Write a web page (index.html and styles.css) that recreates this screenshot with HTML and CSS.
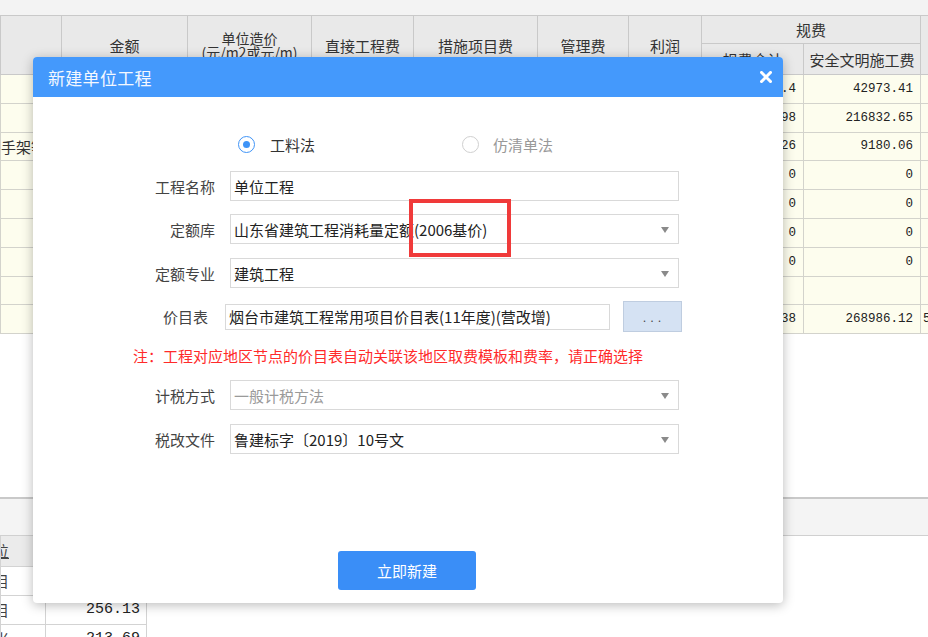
FILE: index.html
```html
<!DOCTYPE html>
<html lang="zh-CN">
<head>
<meta charset="utf-8">
<title>新建单位工程</title>
<link rel="stylesheet" href="styles.css">
</head>
<body>
<div class="app">
  <div class="upper">
    <div class="topbar"></div>
    <table class="grid">
      <colgroup>
        <col class="w61"><col class="w126"><col class="w124"><col class="w102"><col class="w124"><col class="w91"><col class="w73"><col class="w102"><col class="w117"><col class="w100">
      </colgroup>
      <thead>
        <tr class="h1">
          <th rowspan="2"></th>
          <th rowspan="2">金额</th>
          <th rowspan="2" class="two">单位造价<br>(元/m2或元/m)</th>
          <th rowspan="2">直接工程费</th>
          <th rowspan="2">措施项目费</th>
          <th rowspan="2">管理费</th>
          <th rowspan="2">利润</th>
          <th colspan="2">规费</th>
          <th rowspan="2"></th>
        </tr>
        <tr class="h2">
          <th>规费合计</th>
          <th>安全文明施工费</th>
        </tr>
      </thead>
      <tbody>
        <tr><td></td><td></td><td></td><td></td><td></td><td></td><td></td><td class="num">52156.4</td><td class="num">42973.41</td><td></td></tr>
        <tr><td></td><td></td><td></td><td></td><td></td><td></td><td></td><td class="num">259188.98</td><td class="num">216832.65</td><td></td></tr>
        <tr><td class="name">手架等</td><td></td><td></td><td></td><td></td><td></td><td></td><td class="num">10974.26</td><td class="num">9180.06</td><td></td></tr>
        <tr><td></td><td></td><td></td><td></td><td></td><td></td><td></td><td class="num">0</td><td class="num">0</td><td></td></tr>
        <tr><td></td><td></td><td></td><td></td><td></td><td></td><td></td><td class="num">0</td><td class="num">0</td><td></td></tr>
        <tr><td></td><td></td><td></td><td></td><td></td><td></td><td></td><td class="num">0</td><td class="num">0</td><td></td></tr>
        <tr><td></td><td></td><td></td><td></td><td></td><td></td><td></td><td class="num">0</td><td class="num">0</td><td></td></tr>
        <tr><td></td><td></td><td></td><td></td><td></td><td></td><td></td><td></td><td></td><td></td></tr>
        <tr><td></td><td></td><td></td><td></td><td></td><td></td><td></td><td class="num">321426.38</td><td class="num">268986.12</td><td class="lnum">52440.26</td></tr>
      </tbody>
    </table>
  </div>
  <div class="strip"></div>
  <table class="sub">
    <colgroup><col class="w45"><col class="w101"></colgroup>
    <thead><tr><th class="cut"><span class="shift ul">单位</span></th><th></th></tr></thead>
    <tbody>
      <tr><td class="cut"><span class="shift">项目</span></td><td class="num">1862.40</td></tr>
      <tr><td class="cut"><span class="shift">项目</span></td><td class="num">256.13</td></tr>
      <tr><td class="cut"><span class="shift">平米</span></td><td class="num">213.69</td></tr>
    </tbody>
  </table>
</div>

<div class="dialog">
  <div class="dlg-head">
    <span class="dlg-title">新建单位工程</span>
    <svg class="close" width="12" height="12" viewBox="0 0 12 12"><path d="M1.5 1.5 L10.5 10.5 M10.5 1.5 L1.5 10.5" stroke="#fff" stroke-width="3" stroke-linecap="square"/></svg>
  </div>
  <div class="dlg-body">
    <div class="radios">
      <label class="radio on"><span class="dot"></span><span>工料法</span></label>
      <label class="radio off"><span class="dot"></span><span>仿清单法</span></label>
    </div>
    <div class="row r-name">
      <span class="label">工程名称</span>
      <div class="field input">单位工程</div>
    </div>
    <div class="row r-lib">
      <span class="label">定额库</span>
      <div class="field select">山东省建筑工程消耗量定额(2006基价)<span class="arrow"></span></div>
    </div>
    <div class="row r-spec">
      <span class="label">定额专业</span>
      <div class="field select">建筑工程<span class="arrow"></span></div>
    </div>
    <div class="row r-price">
      <span class="label">价目表</span>
      <div class="pfield">
        <div class="pinput">烟台市建筑工程常用项目价目表(11年度)(营改增)</div>
        <div class="pbtn">. . .</div>
      </div>
    </div>
    <div class="note">注：工程对应地区节点的价目表自动关联该地区取费模板和费率，请正确选择</div>
    <div class="row r-tax">
      <span class="label">计税方式</span>
      <div class="field select disabled">一般计税方法<span class="arrow"></span></div>
    </div>
    <div class="row r-doc">
      <span class="label">税改文件</span>
      <div class="field select">鲁建标字〔2019〕10号文<span class="arrow"></span></div>
    </div>
    <div class="actions">
      <button class="primary">立即新建</button>
    </div>
  </div>
</div>

<div class="highlight"></div>
</body>
</html>
```

FILE: styles.css
```css
* { box-sizing: border-box; }
html, body {
  margin: 0;
  padding: 0;
  width: 928px;
  height: 637px;
  overflow: hidden;
  background: #fff;
  font-family: "Noto Sans CJK SC", "Microsoft YaHei", sans-serif;
  color: #333;
}

.app { width: 928px; height: 637px; overflow: hidden; position: relative; }
.upper { height: 497px; overflow: hidden; }
.topbar { height: 15px; background: #f3f3f3; }

.grid {
  border-collapse: collapse;
  table-layout: fixed;
  width: 1020px;
}
.w61 { width: 61px; } .w126 { width: 126px; } .w124 { width: 124px; }
.w102 { width: 102px; } .w91 { width: 91px; } .w73 { width: 73px; }
.w117 { width: 117px; } .w100 { width: 100px; }
.w45 { width: 45px; } .w101 { width: 101px; }

.grid th {
  background: #e9e9e9;
  border: 1px solid #c9c9c9;
  font-weight: normal;
  font-size: 15px;
  color: #333;
  padding: 0;
  text-align: center;
  white-space: nowrap;
  overflow: hidden;
}
.grid tr.h1 th { height: 28px; }
.grid tr.h2 th { height: 31px; }
.grid th.two { line-height: 14px; font-size: 14px; }

.grid td {
  background: #fdfdee;
  border: 1px solid #d3d3cc;
  height: 28.8px;
  padding: 0;
  font-size: 15px;
  white-space: nowrap;
  overflow: hidden;
}
td.num {
  font-family: "Liberation Mono", monospace;
  font-size: 12.5px;
  text-align: right;
  padding-right: 7px;
  color: #222;
}
td.lnum {
  font-family: "Liberation Mono", monospace;
  font-size: 12.5px;
  text-align: left;
  padding-left: 2px;
  color: #222;
}
td.name { text-align: left; color: #333; }

.strip {
  height: 39px;
  background: #f4f4f4;
  border-top: 2px solid #c9c9c9;
  border-bottom: 1px solid #d0d0d0;
}

.sub {
  border-collapse: collapse;
  table-layout: fixed;
  width: 146px;
}
.sub th {
  background: #ebebeb;
  border: 1px solid #d3d3d3;
  border-top: none;
  height: 30px;
  font-weight: normal;
  font-size: 15px;
  padding: 0;
  overflow: hidden;
  white-space: nowrap;
}
.sub td {
  border: 1px solid #d3d3d3;
  height: 29px;
  padding: 0;
  font-size: 15px;
  overflow: hidden;
  white-space: nowrap;
}
.sub .cut { text-align: left; color: #444; }
.shift { display: inline-block; margin-left: -22px; }
.shift.ul { text-decoration: underline; }
.sub td.num { padding-right: 6px; }

/* Dialog */
.dialog {
  position: absolute;
  left: 33px;
  top: 57px;
  width: 750px;
  height: 546px;
  background: #fff;
  border-radius: 4px;
  box-shadow: 0 2px 12px rgba(0, 0, 0, 0.28);
  display: flex;
  flex-direction: column;
  overflow: hidden;
}
.dlg-head {
  height: 40px;
  flex: none;
  background: #4499fc;
  color: #fff;
  display: flex;
  align-items: center;
  justify-content: space-between;
  padding: 0 11px 0 15px;
}
.dlg-title { font-size: 17px; letter-spacing: 0.3px; color: #f4f8ff; }
.close { display: block; }

.dlg-body {
  flex: 1;
  display: flex;
  flex-direction: column;
  padding-bottom: 13px;
}

.radios {
  margin-top: 37px;
  height: 20px;
  display: flex;
  align-items: center;
  padding-left: 205px;
  font-size: 15px;
}
.radio { display: flex; align-items: center; gap: 15px; }
.radio.on { width: 224px; color: #333; }
.radio.off { color: #999; gap: 14px; }
.dot {
  width: 17px;
  height: 17px;
  border-radius: 50%;
  border: 1px solid #d0d0d0;
  position: relative;
  flex: none;
}
.radio.on .dot { border-color: #3f94f7; }
.radio.on .dot::after {
  content: "";
  position: absolute;
  left: 4px;
  top: 4px;
  width: 7px;
  height: 7px;
  border-radius: 50%;
  background: #3f94f7;
}

.row {
  display: flex;
  align-items: center;
  height: 30px;
  font-size: 15px;
}
.label {
  width: 197px;
  padding-right: 15px;
  text-align: right;
  color: #444;
  flex: none;
}
.r-name { margin-top: 17px; }
.r-lib { margin-top: 13px; }
.r-spec { margin-top: 14px; }
.r-price { margin-top: 13px; height: 31px; }
.r-tax { margin-top: 14px; }
.r-doc { margin-top: 14px; }

.field {
  width: 449px;
  height: 30px;
  border: 1px solid #d9d9d9;
  background: #fff;
  display: flex;
  align-items: center;
  padding-left: 3px;
  color: #222;
  position: relative;
  white-space: nowrap;
}
.select .arrow {
  position: absolute;
  right: 9px;
  top: 12px;
  width: 0;
  height: 0;
  border-left: 4px solid transparent;
  border-right: 4px solid transparent;
  border-top: 6px solid #8a8a8a;
}
.select.disabled { color: #9a9a9a; }

.r-price .label { padding-right: 22px; }
.pfield {
  margin-left: -5px;
  display: flex;
  align-items: center;
  gap: 13px;
}
.pinput {
  width: 385px;
  height: 26px;
  border: 1px solid #d9d9d9;
  display: flex;
  align-items: center;
  padding-left: 3px;
  color: #222;
  white-space: nowrap;
}
.pbtn {
  width: 59px;
  height: 31px;
  background: #d5e2f3;
  border: 1px solid #bfcde0;
  display: flex;
  align-items: center;
  justify-content: center;
  font-size: 11px;
  color: #444;
  letter-spacing: 1px;
}

.note {
  margin-top: 14px;
  height: 20px;
  line-height: 20px;
  padding-left: 100px;
  font-size: 15px;
  color: #ff2a2a;
}

.actions {
  margin-top: auto;
  display: flex;
  padding-left: 305px;
}
.primary {
  width: 138px;
  height: 39px;
  border: none;
  border-radius: 3px;
  background: #3a8ef7;
  color: #fff;
  font-family: "Noto Sans CJK SC", sans-serif;
  font-size: 15px;
  padding: 0;
}

.highlight {
  position: absolute;
  left: 409px;
  top: 199px;
  width: 102px;
  height: 58px;
  border: 4px solid #f03a3a;
}
```
